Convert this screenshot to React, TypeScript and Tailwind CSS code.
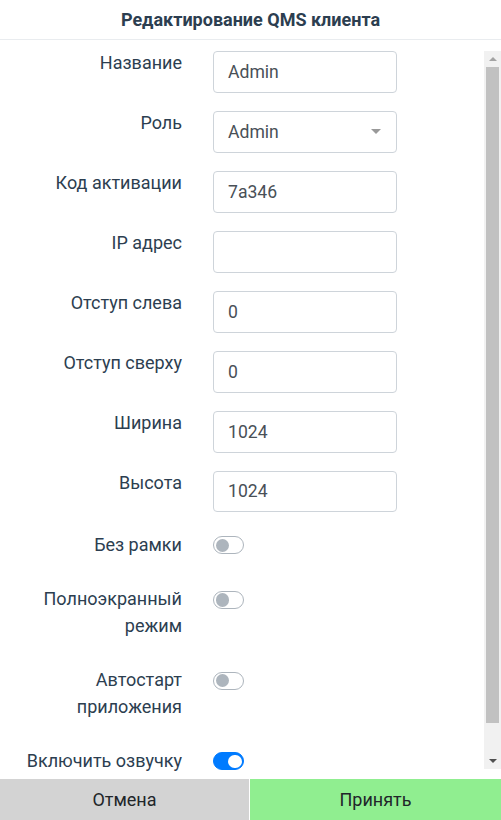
const inputRows: { label: string; value: string; select?: boolean }[] = [
  { label: "Название", value: "Admin" },
  { label: "Роль", value: "Admin", select: true },
  { label: "Код активации", value: "7a346" },
  { label: "IP адрес", value: "" },
  { label: "Отступ слева", value: "0" },
  { label: "Отступ сверху", value: "0" },
  { label: "Ширина", value: "1024" },
  { label: "Высота", value: "1024" },
];

const switchRows: { label: string; on: boolean }[] = [
  { label: "Без рамки", on: false },
  { label: "Полноэкранный режим", on: false },
  { label: "Автостарт приложения", on: false },
  { label: "Включить озвучку", on: true },
];

function Toggle({ on }: { on: boolean }) {
  return (
    <div
      className={
        on
          ? "mt-[4.5px] w-[31px] h-[18px] rounded-full border border-[#007bff] bg-[#007bff] flex items-center justify-end px-[1.5px]"
          : "mt-[4.5px] w-[31px] h-[18px] rounded-full border border-[#adb5bd] bg-white flex items-center justify-start px-[1.5px]"
      }
    >
      <div className={on ? "w-[13.6px] h-[13.6px] rounded-full bg-white" : "w-[13.6px] h-[13.6px] rounded-full bg-[#adb5bd]"} />
    </div>
  );
}

function FakeScrollbar() {
  return (
    <div className="w-[17px] shrink-0 mb-[10px] bg-[#f1f1f1] flex flex-col">
      <div className="h-[16px] flex items-center justify-center">
        <span className="w-0 h-0 border-l-[4px] border-r-[4px] border-b-[4px] border-l-transparent border-r-transparent border-b-[#a3a3a3]" />
      </div>
      <div className="mx-[2px] h-[656px] bg-[#c1c1c1]" />
      <div className="flex-1" />
      <div className="h-[17px] flex items-center justify-center">
        <span className="w-0 h-0 border-l-[4px] border-r-[4px] border-t-[4px] border-l-transparent border-r-transparent border-t-[#505050]" />
      </div>
    </div>
  );
}

export default function App() {
  return (
    <div className="w-[501px] h-[820px] flex flex-col bg-white font-['Roboto','Liberation_Sans',sans-serif] text-[17.6px]">
      <div className="h-[40px] shrink-0 border-b border-[#e9ecef] flex items-center justify-center font-bold text-[18px] text-[#2c3e50]">
        Редактирование QMS клиента
      </div>
      <div className="flex-1 mt-[11px] flex min-h-0">
        <div className="flex-1 overflow-hidden">
          {inputRows.map((r) => (
            <div key={r.label} className="flex items-start mb-[18.4px]">
              <div className="w-[182px] pl-[10px] text-right text-[18px] text-[#2c3e50] leading-[26.4px] -mt-[1px]">{r.label}</div>
              <div className="ml-[31px] w-[184px] h-[41.6px] border border-[#ced4da] rounded-[4px] flex items-center justify-between pl-[14px] pr-[15px] text-[#495057]">
                <span>{r.value}</span>
                {r.select && (
                  <span className="w-0 h-0 border-l-[5px] border-r-[5px] border-t-[5px] border-l-transparent border-r-transparent border-t-[#999]" />
                )}
              </div>
            </div>
          ))}
          <div className="pt-[1px]">
            {switchRows.map((r) => (
              <div key={r.label} className="flex items-start mb-[28px]">
                <div className="w-[182px] pl-[10px] text-right text-[18px] text-[#2c3e50] leading-[26.4px]">{r.label}</div>
                <div className="ml-[31px]">
                  <Toggle on={r.on} />
                </div>
              </div>
            ))}
          </div>
        </div>
        <FakeScrollbar />
      </div>
      <div className="h-[41px] shrink-0 flex text-[18px]">
        <button className="w-[249px] bg-[#d3d3d3] text-[#212529] flex items-center justify-center">Отмена</button>
        <div className="w-[1px] bg-white" />
        <button className="flex-1 bg-[#90ee90] text-[#212529] flex items-center justify-center">Принять</button>
      </div>
    </div>
  );
}
